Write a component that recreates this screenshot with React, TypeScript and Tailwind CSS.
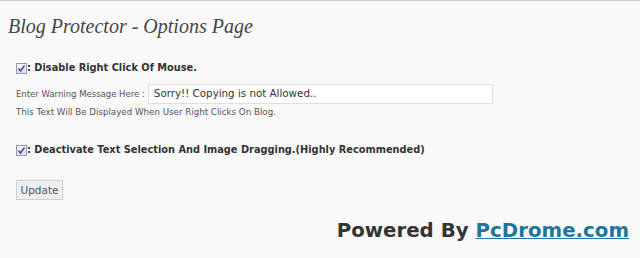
import React from "react";

function Check() {
  return (
    <span className="inline-flex h-[11px] w-[11px] items-center justify-center border border-[#8f9bb3] bg-gradient-to-b from-[#f3f5fa] to-[#d9dfec]">
      <svg width="9" height="9" viewBox="0 0 9 9">
        <path d="M1.5 4.5 L3.5 7 L7.5 1.5" fill="none" stroke="#3a4f86" strokeWidth="1.4" />
      </svg>
    </span>
  );
}

export default function App() {
  return (
    <div className="w-[640px] h-[258px] bg-[#f9f9f9] border-t border-[#cccccc] overflow-hidden text-[#333]" style={{ fontFamily: '"DejaVu Sans", Verdana, sans-serif' }}>
      <div className="pl-[8px] pt-[13px]">
        <h2 className="text-[20px] leading-[24px] italic text-[#464646]" style={{ fontFamily: '"Liberation Serif", Georgia, serif' }}>
          Blog Protector - Options Page
        </h2>
      </div>
      <div className="pl-[16px] pt-[24px]">
        <div className="flex items-center h-[12px]">
          <Check />
          <span className="text-[9.8px] font-bold text-[#333] leading-[12px]">: Disable Right Click Of Mouse.</span>
        </div>
        <div className="flex items-center mt-[10px] h-[20px]">
          <span className="text-[8.5px] text-[#555] pt-[1px]">Enter Warning Message Here :</span>
          <div className="ml-[3px] w-[345px] h-[20px] bg-white border border-[#dfdfdf] flex items-center pl-[5px] text-[10.3px] text-[#333]">
            Sorry!! Copying is not Allowed..
          </div>
        </div>
        <div className="text-[8.7px] text-[#555] mt-[2px] leading-[12px]">
          This Text Will Be Displayed When User Right Clicks On Blog.
        </div>
        <div className="flex items-center h-[12px] mt-[26px]">
          <Check />
          <span className="text-[9.8px] font-bold text-[#333] leading-[12px]">: Deactivate Text Selection And Image Dragging.(Highly Recommended)</span>
        </div>
        <div className="mt-[21px]">
          <button className="w-[47px] h-[20px] border border-[#cfcfcf] bg-[#efefef] text-[10.5px] text-[#555] leading-[18px]">
            Update
          </button>
        </div>
      </div>
      <div className="flex justify-end pr-[11px] mt-[18px]">
        <span className="text-[19.8px] font-bold text-[#333] leading-[24px]">
          Powered By <a className="text-[#21759b] underline">PcDrome.com</a>
        </span>
      </div>
    </div>
  );
}
